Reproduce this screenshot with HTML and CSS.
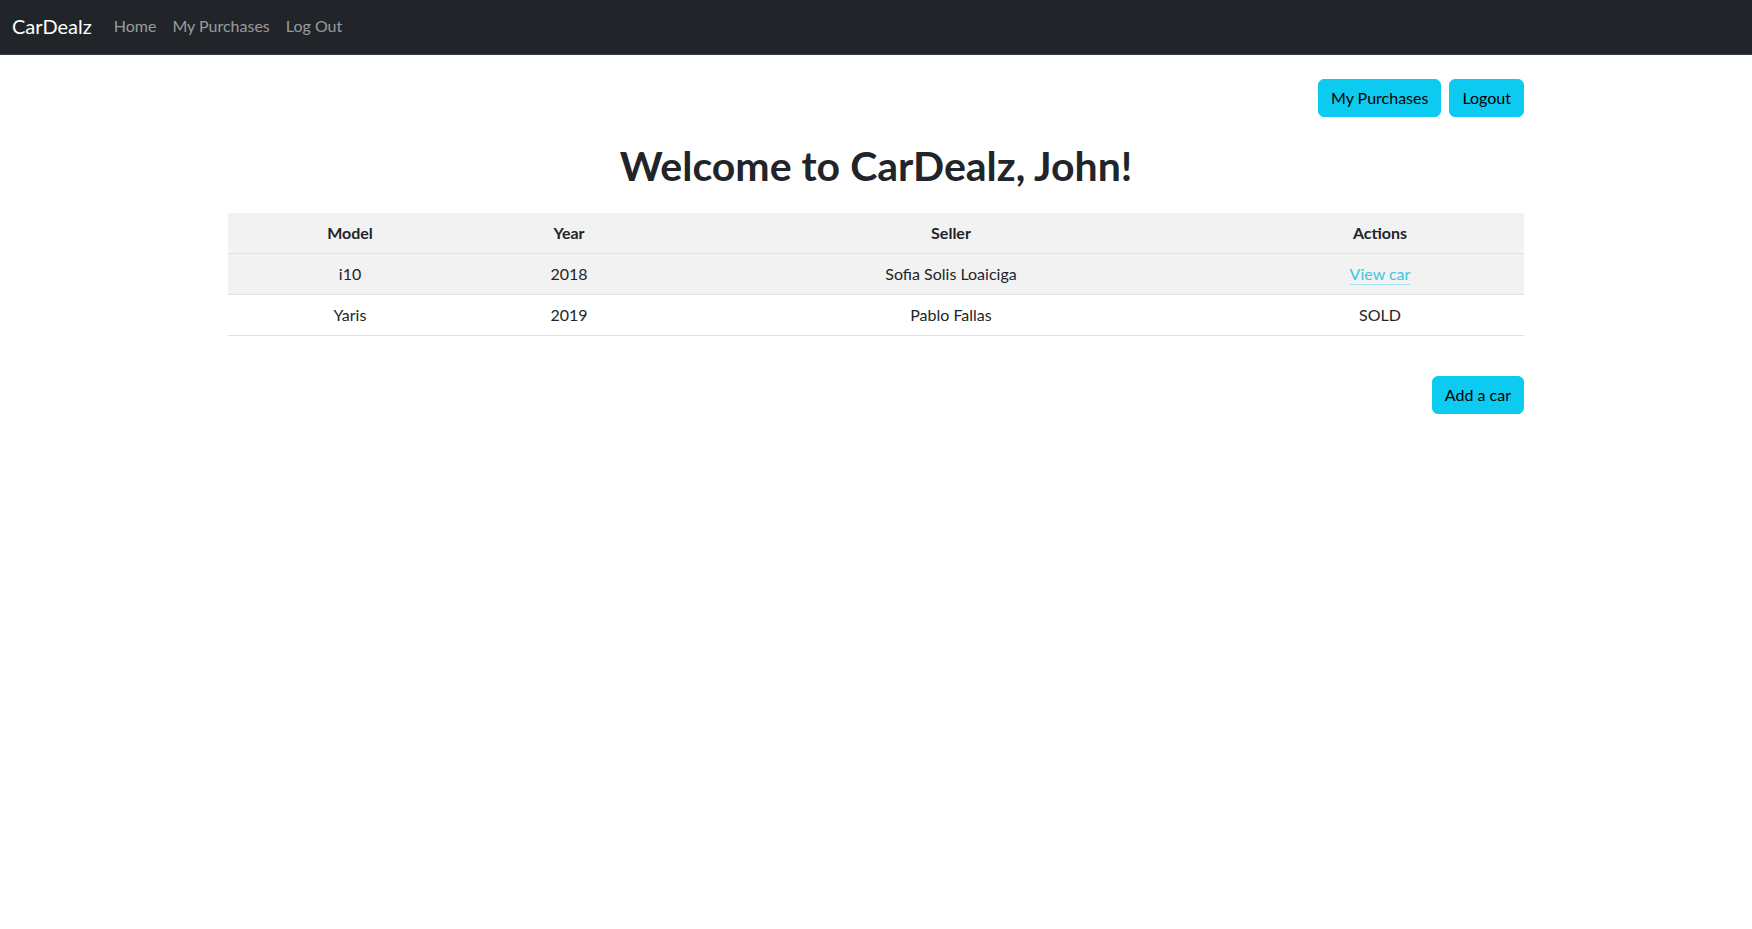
FILE: index.html
```html
<!DOCTYPE html>
<html lang="en">
<head>
<meta charset="utf-8">
<title>CarDealz</title>
<link rel="stylesheet" href="styles.css">
</head>
<body>
<nav class="navbar">
  <a class="brand" href="#">CarDealz</a>
  <ul class="nav">
    <li><a href="#">Home</a></li>
    <li><a href="#">My Purchases</a></li>
    <li><a href="#">Log Out</a></li>
  </ul>
</nav>
<main class="container">
  <div class="top-actions">
    <button class="btn">My Purchases</button>
    <button class="btn">Logout</button>
  </div>
  <h1 class="title">Welcome to CarDealz, John!</h1>
  <table class="cars">
    <thead>
      <tr><th class="c-model">Model</th><th class="c-year">Year</th><th class="c-seller">Seller</th><th class="c-actions">Actions</th></tr>
    </thead>
    <tbody>
      <tr class="striped"><td>i10</td><td>2018</td><td>Sofia Solis Loaiciga</td><td><a class="link" href="#">View car</a></td></tr>
      <tr><td>Yaris</td><td>2019</td><td>Pablo Fallas</td><td>SOLD</td></tr>
    </tbody>
  </table>
  <div class="bottom-actions">
    <button class="btn">Add a car</button>
  </div>
</main>
</body>
</html>
```

FILE: styles.css
```css
* { box-sizing: border-box; }
html, body { margin: 0; padding: 0; }
body {
  font-family: "Lato", "Noto Sans", sans-serif;
  font-size: 16px;
  line-height: 1.5;
  color: #212529;
  background: #fff;
}
.navbar {
  display: flex;
  align-items: center;
  height: 55px;
  padding: 0 12px 2px;
  background: #212529;
  border-bottom: 1px solid #3a3d41;
}
.brand {
  color: #fff;
  text-decoration: none;
  font-size: 20px;
  margin-right: 14px;
}
.nav {
  display: flex;
  list-style: none;
  margin: 0;
  padding: 0;
}
.nav a {
  display: block;
  padding: 8px 8px;
  color: rgba(255,255,255,0.55);
  text-decoration: none;
}
.container {
  width: 1296px;
  margin: 0 auto;
}
.top-actions {
  display: flex;
  justify-content: flex-end;
  gap: 8px;
  margin-top: 24px;
}
.btn {
  font-family: inherit;
  font-size: 16px;
  line-height: 24px;
  padding: 6px 12px;
  height: 38px;
  border: 1px solid #0dcaf0;
  border-radius: 6px;
  background: #0dcaf0;
  color: #000;
  cursor: pointer;
}
.title {
  margin: 25px 0 23px;
  font-size: 41px;
  font-weight: 700;
  line-height: 48px;
  text-align: center;
}
.cars {
  width: 100%;
  border-collapse: collapse;
  table-layout: fixed;
}
.cars th, .cars td {
  padding: 8px;
  text-align: center;
  border-bottom: 1px solid #dee2e6;
  line-height: 24px;
}
.cars thead tr { background: #f2f2f2; }
.cars tr.striped { background: #f2f2f2; }
.c-model { width: 244px; }
.c-year { width: 194px; }
.c-seller { width: 570px; }
.c-actions { width: 288px; }
.link {
  color: #3ec5e0;
  text-decoration: underline;
  text-decoration-color: #a6e3ef;
  text-underline-offset: 4px;
}
.bottom-actions {
  display: flex;
  justify-content: flex-end;
  margin-top: 40px;
}
```
